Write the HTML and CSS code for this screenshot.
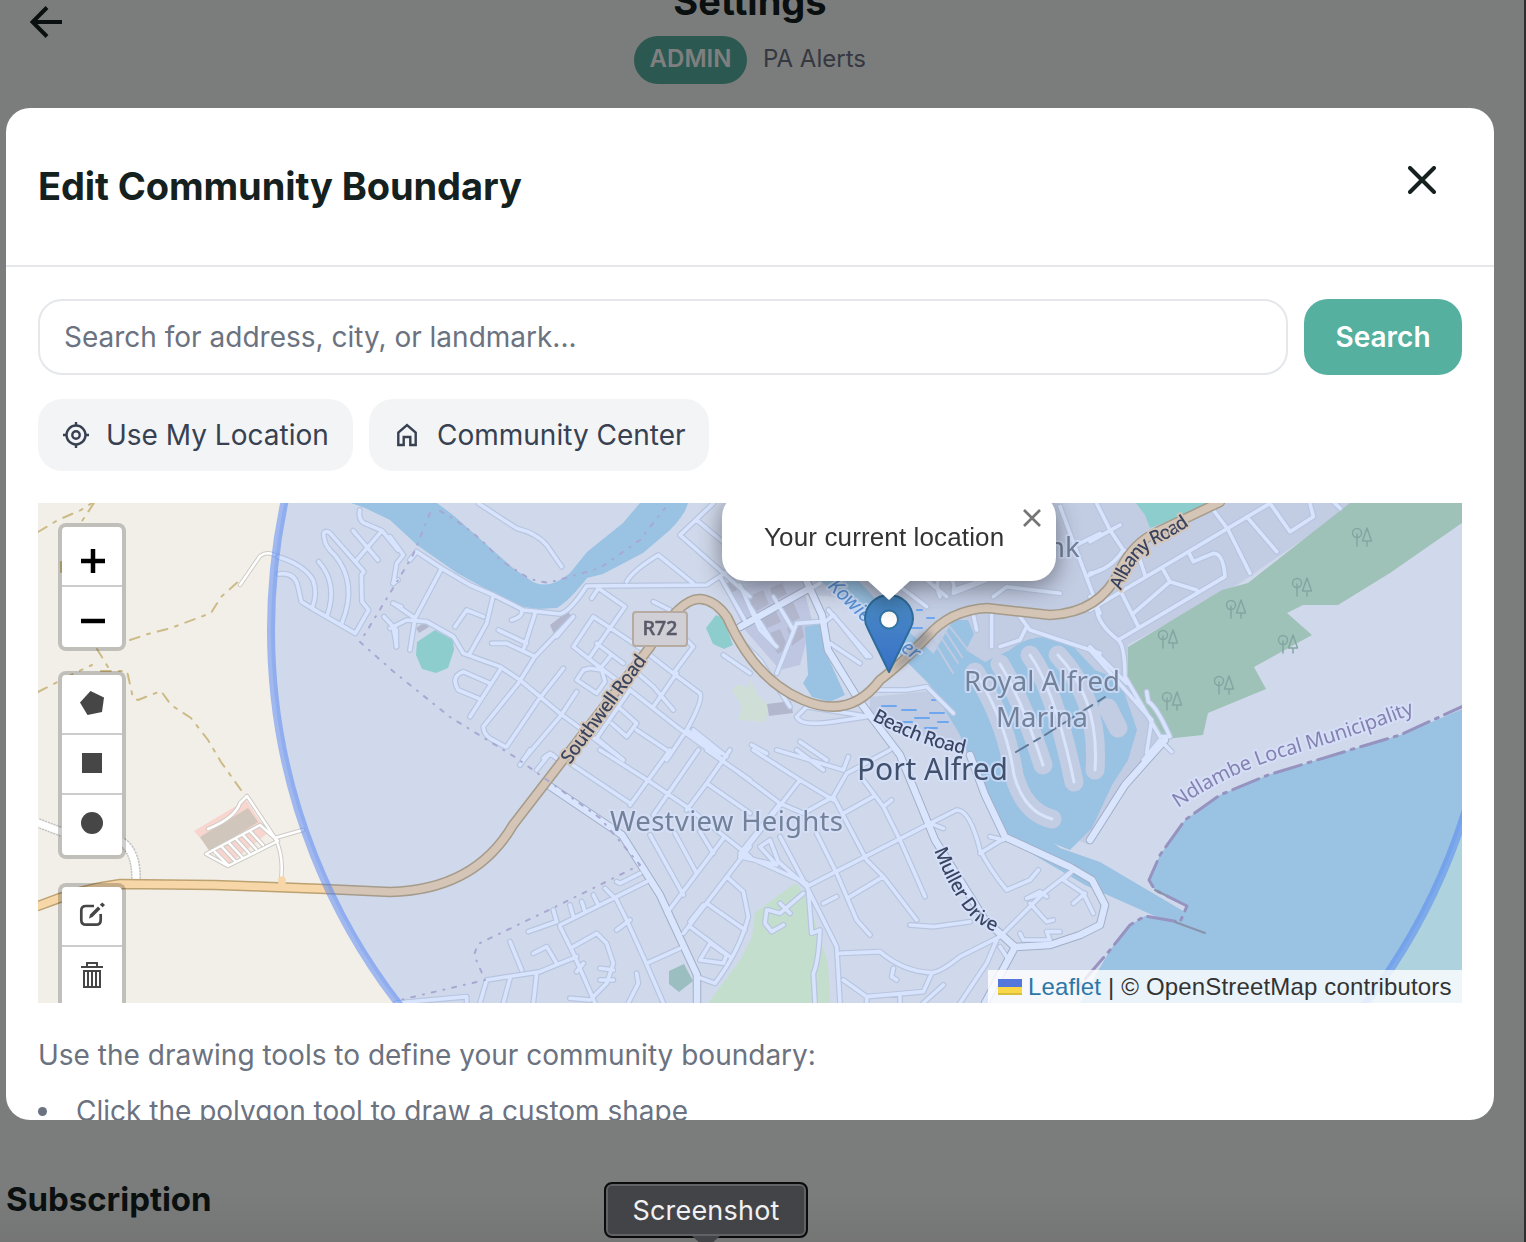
FILE: index.html
```html
<!DOCTYPE html>
<html lang="en">
<head>
<meta charset="utf-8">
<title>Edit Community Boundary</title>
<link rel="stylesheet" href="styles.css">
</head>
<body>
<div class="page">
  <header class="page-header">
    <svg class="back" viewBox="0 0 32 32"><path d="M32 16H3M17 1.500 2.500 16 17 30.500"/></svg>
    <div class="page-heading">
      <h1>Settings</h1>
      <div class="page-sub"><span class="badge">ADMIN</span><span class="org">PA Alerts</span></div>
    </div>
  </header>
  <h2 class="section-title">Subscription</h2>
</div>

<div class="overlay">
  <div class="modal">
    <div class="modal-header">
      <h2>Edit Community Boundary</h2>
      <svg class="close" viewBox="0 0 28 28"><path d="M2 2 26 26M26 2 2 26"/></svg>
    </div>
    <div class="modal-body">
      <div class="search-row">
        <div class="search-input">Search for address, city, or landmark...</div>
        <div class="search-button">Search</div>
      </div>
      <div class="chips">
        <div class="chip"><svg viewBox="0 0 28 28"><circle cx="14" cy="14" r="9.500"/><circle cx="14" cy="14" r="3.700"/><path d="M14 1v4M14 23v4M1 14h4M23 14h4"/></svg><span class="chip-a">Use My Location</span></div>
        <div class="chip"><svg viewBox="0 0 28 28"><path d="M5.300 24V11.500L14 4l8.700 7.500V24h-5.400v-8h-6.600v8z"/></svg><span class="chip-b">Community Center</span></div>
      </div>

      <div class="map">
        <svg class="tiles" viewBox="38 503 1424 500">
          <defs>
            <g id="streets">
              <g transform="translate(38 500) scale(.33333)">
                <path d="M720 170Q800 195 825 240Q840 280 822 325M722 222Q770 215 780 260L790 305 822 325 952 400 992 330 972 305 970 225 978 215 875 98Q850 85 860 120Q862 140 890 165Q960 250 912 368M842 185Q900 250 868 345M952 185 1032 92 1080 150M945 92 1020 180M965 30Q960 65 985 72L1032 92M1080 240 1065 250M1038 350 1075 390V440M1065 310 1090 320"/>
              </g>
              <g transform="translate(390 500) scale(.33333)">
                <path d="M0 110 40 165 20 190 10 250M60 180 80 155 155 205 240 255 310 285 400 330 510 342Q540 335 590 258L950 255 1080 170M155 205 75 355 60 450M10 310 75 355M0 385 50 360 110 365 190 410 220 460 330 500 390 540 510 640 700 780M310 285 290 370 240 460M195 380 230 330 280 350M365 360Q400 350 395 330M435 340 400 450M325 390 410 430M305 430 350 430 435 470M550 350 435 470 385 550 280 680Q280 700 300 715L345 740M550 350 500 410M240 650 330 510M300 550 220 515Q180 530 205 570L265 595M520 505 445 600 350 740M560 575 510 650 400 780M265 10 380 85Q440 100 470 135L515 200M605 295 625 265 705 320 600 470M610 350 550 440 640 510 720 570 860 680 1000 780M610 350 760 450 850 520 930 580Q940 600 890 690L830 780M620 430 700 490M580 510 560 540 620 580 645 545 635 510 600 505ZM660 470 635 500M720 500 790 560 850 630M860 520 790 620M720 570 620 715M710 245Q730 210 805 165L910 250M970 10 870 105 1080 290M920 60 1010 135M990 230 1070 370M790 305 840 330M850 520 910 440 890 420M665 670 710 710 740 670 690 625M740 690 830 750M910 690 1010 770M620 715 700 780M890 690 990 760M1000 465 1080 520"/>
                <path d="M10 385 20 440M460 775Q480 755 495 770"/>
              </g>
              <g transform="translate(390 750) scale(.33333)">
                <path d="M390 45 420 0M440 60 480 10 500 25M540 40 720 160M630 0 780 95 890 170 1080 320M840 0 720 165M925 0 790 195M1020 0 950 100 890 180M950 0 1080 90M950 100 1080 190M780 255 880 435M855 250 920 370M930 245 970 310M1000 265 830 490M1080 290 880 550M1010 380 1060 425 1075 500Q1050 600 975 700L920 680M950 460 1065 540M900 530 1020 620M940 465 900 515M960 580 930 630 1000 640 1010 615 960 580M750 370 690 400 680 395M770 395 510 525M415 545 500 515 490 480M550 500 540 465M585 485 575 455M625 465 610 435M680 450 645 415M510 530 550 610 615 759M550 590 620 550 650 580 670 640 650 700 600 750 540 745M680 450 710 510 760 620 820 759M680 540 720 510M870 595 770 640M500 640 470 590 430 610M395 660 360 575M560 620 450 665 290 690 270 759M360 685 340 759M440 670 430 759M20 759 230 740 230 759M740 670 745 700 715 759M630 655 670 660M630 690 670 690M560 665 580 640"/>
              </g>
              <g transform="translate(740 500) scale(.33333)">
                <path d="M0 380 240 250M30 320 100 430M100 290 160 390M0 255 60 390 110 440M240 365 170 370 110 520M0 420 60 480 150 620M170 650 200 620 390 650M170 650Q180 680 280 665L380 650M35 735 80 760M180 725 260 780M265 330 390 470M250 370 280 345 380 470M270 430 360 490M460 245 560 320M560 240 620 290M600 290Q580 240 610 230Q650 230 640 280L740 240 760 190M760 290 800 260 960 280M700 345 710 390M755 345V440M780 440 840 420 860 380M840 350 870 390 1080 460M640 270 760 230M960 20 1080 340M1000 140 1080 100M1040 230 1080 210M400 570 500 570 560 560 640 640M400 560 460 510"/>
              </g>
              <g transform="translate(740 750) scale(.33333)">
                <path d="M0 70 120 160 190 190 280 140 320 70 450 0M40 0 180 90 0 320M110 0 310 60M310 60 325 20M170 0 250 60M120 160 0 310M180 90 280 150M280 140 380 330 430 380 530 510M310 190 400 140M370 90 430 170 480 270 555 440M430 170 455 150M200 410 570 220 650 180Q690 180 720 300Q750 360 800 420L870 390 895 360M720 310 800 260M750 260 790 270M570 220 610 235M120 260 200 410M230 250 290 370 350 510 390 555M330 440 430 380M250 460 290 440M510 525 580 530 690 515M0 320 110 345 60 290 90 270 115 335 200 410 290 590 300 759M0 310 200 400M300 610 420 605Q490 665 575 668Q600 668 660 620L780 560 910 430 860 445 900 425 920 440M870 460 920 515 940 510M910 430 1000 360 970 390 1030 430 1060 490M1000 460 1035 430M310 690 380 740 550 725 575 670M380 740V759M480 740V759M550 759 610 705M460 655 455 680 470 690M770 570 740 640 660 759M780 590 800 620M840 550 850 570 930 570 920 545 960 545M85 480 120 490 190 430M80 480 75 520 95 545 130 525M120 460 150 490M205 420 215 550 240 540Q235 640 220 670L225 759"/>
              </g>
              <g transform="translate(1090 500) scale(.33333)">
                <path d="M20 10 60 90 100 150Q60 210 0 220M0 125 90 75M100 150 145 165 165 225M370 30 415 90 480 220M540 10 0 330M20 320Q20 370 85 420L405 230Q400 160 370 160L310 185 295 155M470 50 560 155M540 10 600 95 670 50 660 10M130 340 240 245 220 210M240 245 320 270M85 260 145 380M20 320 0 290M85 420Q105 440 105 530L210 710 240 710Q200 620 175 605L170 575M0 440 110 550M210 720 160 780M210 720 245 755M730 5 750 25M0 450 185 660 170 759"/>
              </g>
            </g>
            <g id="avenues">
              <path d="M548 785 622 835 660 895 697 975V1003M806 580 822 615 828 650 860 702 900 755 935 840 985 920 1015 947 1050 945 1080 935 1100 925 1105 905 1092 880 1070 867 1005 837 985 795 970 755M1015 947 985 1003M1090 840 1125 785 1165 740M740 627 810 588"/>
            </g>
            <g id="trunk">
              <path d="M38 906Q80 889 120 884L215 885 325 889 390 892Q475 890 513 825L550 777 650 647Q680 598 700 599Q715 600 727 617Q755 680 803 700Q850 720 880 680Q900 665 927 637Q950 610 987 608L1050 615Q1100 613 1120 570Q1133 543 1157 532L1220 502"/>
            </g>
            <g id="trees"><circle cx="5" cy="6" r="4.500"/><path d="M5 7v12M15 1 10.500 14h9ZM15 14v5"/></g>
            <filter id="soft"><feGaussianBlur stdDeviation="0.600"/></filter>
            <linearGradient id="pin" x1="0" y1="0" x2="0" y2="1"><stop offset="0" stop-color="#4a8bc4"/><stop offset="1" stop-color="#3871c8"/></linearGradient>
          </defs>

          <rect class="land" x="38" y="503" width="1424" height="500"/>
          <g filter="url(#soft)">
            <g class="built">
              <path d="M740 500H1360L1240 583 1128 645V678L1165 740 1125 785 1090 845 1010 815 960 730 920 660 880 600 740 590Z"/>
              <path d="M870 697 940 690 965 730 960 750 870 715Z"/>
              <path class="old-town" d="M725 590 800 575 812 620 800 665 780 670 745 630Z"/>
            </g>
            <g class="green">
              <path d="M796 883 808 900 828 963 830 1003H708L740 960 752 937 755 912Z"/>
              <path class="school" d="M732 690 738 684 748 688 750 680 758 695 768 705 766 722 738 720 742 706Z"/>
            </g>
            <path class="wood" d="M1350 503H1462V523L1390 573 1338 605H1303L1287 613 1312 635 1254 667 1266 689 1208 713 1203 735 1165 739 1128 677V647L1222 590 1248 583Z"/>
            <g class="pitch">
              <path d="M435 630 453 640 454 650 448 668 436 673 422 669 416 655 417 642Z"/>
              <path d="M716 615 723 618 733 645 724 649 713 644 706 628Z"/>
              <path d="M1136 503H1210L1190 513 1150 528 1145 515Z"/>
            </g>
            <path class="deep" d="M669 971 684 964 693 981 679 992 669 984Z"/>

            <g class="water">
              <path d="M351 503 365 508 390 520 417 545 457 573 517 606 537 609 557 608Q570 600 587 578L603 574 643 553 670 530Q685 515 688 503H640L623 523 587 552 570 573Q550 590 533 582L513 568 470 530 453 515 437 503Z"/>
              <path d="M820 580H858L890 615 925 646 950 669 980 700 1000 730 1010 775 1023 820 1060 848 1100 862 1190 915 1175 925 1085 885 1000 835 980 785 960 735 930 685 900 655Z"/>
              <path d="M805 627 820 623 827 655 845 695 830 702 812 697 803 683 808 675Z"/>
              <path d="M953 620H968L974 634 966 650 985 662 1010 650Q1025 636 1050 637L1070 643 1095 670 1120 680 1137 730 1128 760 1112 785 1092 828 1070 850 1020 830 990 790 960 730 930 660Z"/>
              <path d="M1470 706 1400 735 1350 750 1268 775 1220 795 1185 820 1160 855 1149 880 1155 890 1187 906 1180 922 1145 916 1130 925 1110 950 1080 1003H1462Z"/>
              <path class="reeds" d="M882 706h14M902 710h14M930 713h14M915 718h14M903 722h9M938 722h10M925 728h12M932 700h7M910 628h12M927 618h7M917 610h5"/>
            </g>
            <g class="fingers">
              <path d="M975 672Q1006 720 1014 775Q1024 812 1052 819M1000 664Q1022 700 1043 765M1030 655Q1055 690 1074 782M1058 655Q1100 700 1095 770M1108 708 1118 728"/>
              <path class="finger-roads" d="M975 672Q1006 720 1014 775Q1024 812 1052 819M1000 664Q1022 700 1043 765M1030 655Q1055 690 1074 782M1058 655Q1100 700 1095 770"/>
            </g>
            <path class="piers" d="M933 640 953 673M940 636 958 663M945 631 962 657M950 627 968 650"/>

            <g class="blocks">
              <path d="m748 597 15-7 6 14-14 8zM770 588l12-5 5 11-13 7zM757 618l18-9 6 13-16 7zM783 607l10-5 7 16-12 6zM765 635l15-6 8 18-10 7zM787 628l14-6 3 15-12 9zM767 704l24-3 2 12-24 3zM722 585l12-5 5 9-12 6zM416 628l9-6 4 5-10 6zM550 625l18-14 3 5-17 18z"/>
            </g>
            <path class="mall" d="M194 831 246 800 268 833 225 867Z"/>
            <path class="store" d="M200 837 248 808 258 822 210 852Z"/>
            <path class="service-case" d="M208 829Q235 818 240 803L247 796 275 838 303 830M275 838Q284 855 281 880M206 854 260 825 278 841 228 866ZM215 852 228 865M222 847 235 861M229 843 242 857M236 839 249 853M243 835 256 849M250 831 263 845M240 585 260 556Q268 550 278 557"/>
            <path class="service-fill" d="M208 829Q235 818 240 803L247 796 275 838 303 830M275 838Q284 855 281 880M206 854 260 825 278 841 228 866ZM215 852 228 865M222 847 235 861M229 843 242 857M236 839 249 853M243 835 256 849M250 831 263 845M240 585 260 556Q268 550 278 557"/>
            <path class="track-case" d="M38 823 62 832M122 842Q137 852 136 882"/>
            <path class="track" d="M38 823 62 832M122 842Q137 852 136 882"/>

            <use href="#streets" class="street-case"/>
            <use href="#avenues" class="avenue-case"/>
            <use href="#streets" class="street"/>
            <use href="#avenues" class="avenue"/>
            <use href="#trunk" class="trunk-case"/>
            <path class="trunk" d="M282 886v-6"/>
            <use href="#trunk" class="trunk"/>

            <path class="footpath" d="M38 532 58 520 81 510 95 501M94 503 78 527M61 562v10M130 640 148 634 171 628 211 613 221 597 240 580M38 692 75 673 92 665M97 649 108 667 101 671 127 671 133 698 138 700 161 691 171 705 191 718 208 740 221 762 241 790"/>
            <path class="parish" d="M430 513 413 555 395 585 360 642 394 672 450 717 515 757 600 818 640 865 555 907 478 944 474 955 485 980 400 1000M440 511Q475 530 500 560L530 579 548 583 600 568 640 540 665 508"/>
            <path class="border" d="M1470 703 1400 735 1350 750 1268 775 1220 795 1185 820 1160 855 1149 880 1155 890 1187 906 1180 922 1145 916 1130 925 1110 950 1080 985"/>
            <path class="jetty" d="M1155 890 1165 895M1175 922 1205 933"/>
            <path class="bridge" d="M1016 752 1040 738M1045 735 1105 697"/>

            <g class="trees">
              <use href="#trees" x="1352" y="527"/><use href="#trees" x="1292" y="577"/><use href="#trees" x="1226" y="599"/><use href="#trees" x="1158" y="629"/><use href="#trees" x="1278" y="634"/><use href="#trees" x="1214" y="675"/><use href="#trees" x="1162" y="691"/>
            </g>

            <g class="shield"><rect x="633" y="612" width="54" height="34" rx="3"/><text x="660" y="635" textLength="35">R72</text></g>
            <g class="labels">
              <text class="suburb" x="610" y="831" textLength="233">Westview Heights</text>
              <text class="suburb" x="964" y="691" textLength="156">Royal Alfred</text>
              <text class="suburb" x="996" y="727" textLength="92">Marina</text>
              <text class="suburb" x="1048" y="557">nk</text>
              <text class="town" x="857" y="780" textLength="151">Port Alfred</text>
              <text class="road on-trunk" transform="translate(570 765) rotate(-53.500)" textLength="130">Southwell Road</text>
              <path id="albany" fill="none" d="M1121 591Q1136 553 1158 543T1196 520"/>
              <text class="road on-trunk"><textPath href="#albany" textLength="98">Albany Road</textPath></text>
              <path id="beach" fill="none" d="M872 720Q890 730 915 740T980 757"/>
              <text class="road"><textPath href="#beach" textLength="99">Beach Road</textPath></text>
              <path id="muller" fill="none" d="M934 850Q948 885 963 907T1004 934"/>
              <text class="road"><textPath href="#muller" textLength="105">Muller Drive</textPath></text>
              <text class="river" transform="translate(827 587) rotate(44)">Kowie</text>
              <text class="river" transform="translate(900 650) rotate(36)">er</text>
              <path id="ndlambe" fill="none" d="M1178 808Q1230 772 1290 755T1418 712"/>
              <text class="district"><textPath href="#ndlambe" textLength="256">Ndlambe Local Municipality</textPath></text>
            </g>
          </g>
          <circle class="area-fill" cx="882" cy="630" r="611"/>
          <circle class="area-line" cx="882" cy="630" r="611"/>
          <g class="marker">
            <path class="marker-shadow" d="M890 672 920 635Q940 625 925 645Q915 660 890 672Z"/>
            <path class="marker-pin" d="M889 672 868 629Q865 624 865 619A24 24 0 0 1 913 619Q913 624 910 629Z"/>
            <circle class="marker-dot" cx="889" cy="619.500" r="9"/>
          </g>
        </svg>

        <div class="controls">
          <div class="bar zoom">
            <span><svg viewBox="0 0 24 24"><path d="M0 12h24M12 0v24" stroke="#000" stroke-width="4.500"/></svg></span>
            <span><svg viewBox="0 0 24 24"><path d="M0 12h24" stroke="#000" stroke-width="4.500"/></svg></span>
          </div>
          <div class="bar">
            <span><svg viewBox="0 0 24 24"><path d="M10.500 0 24 6.500 22 21 7.500 24 0 11.500Z"/></svg></span>
            <span><svg viewBox="0 0 24 24"><path d="M2 2h20v20H2z"/></svg></span>
            <span><svg viewBox="0 0 24 24"><circle cx="12" cy="12" r="11"/></svg></span>
          </div>
          <div class="bar edit">
            <span><svg viewBox="0 0 24 24"><path d="M14 3H6Q1.300 3 1.300 7.500V17Q1.300 21.700 6 21.700H16Q20.700 21.700 20.700 17V11" fill="none" stroke="#464646" stroke-width="2.700"/><path d="M9 15.500 10 11.500 18 3.500 20.500 6 12.500 14ZM19.800 1.700 22.300-.500 25 2 22.700 4.300Z"/></svg></span>
            <span><svg class="trash" viewBox="0 0 24 28"><path d="M1 6h22M7 5.500V2h10v3.500M4 10h16v16H4zM8 10v16M12 10v16M16 10v16" fill="none" stroke="#464646" stroke-width="2"/></svg></span>
          </div>
        </div>

        <div class="popup">
          <div class="popup-box">Your current location<svg class="popup-close" viewBox="0 0 18 18"><path d="M1 1 17 17M17 1 1 17"/></svg></div>
          <div class="popup-tip"></div>
        </div>

        <div class="attribution"><span class="flag"></span><span class="attribution-text"><span class="link">Leaflet</span> | © OpenStreetMap contributors</span></div>
      </div>

      <p class="help">Use the drawing tools to define your community boundary:</p>
      <ul class="help-list"><li>Click the polygon tool to draw a custom shape</li></ul>
    </div>
  </div>
</div>

<div class="tooltip">Screenshot</div>
</body>
</html>
```
FILE: styles.css
```css
* { box-sizing: border-box; }
body { margin: 0; width: 1526px; height: 1242px; overflow: hidden; position: relative; font-family: Inter, "Liberation Sans", sans-serif; background: #f7faf9; }
h1, h2, p, ul { margin: 0; padding: 0; }

.page { height: 1242px; display: flex; flex-direction: column; justify-content: space-between; padding: 0 30px 19px 6px; border-right: 2px solid #5c5c62; background: linear-gradient(#f7faf9 1190px, #e9ebea); }
.page-header { position: relative; height: 108px; display: flex; justify-content: center; }
.page-heading { display: flex; flex-direction: column; align-items: center; gap: 11px; }
h1 { font-size: 38px; line-height: 48px; margin-top: -23px; font-weight: 700; color: #14211e; letter-spacing: 0; }
.back { position: absolute; left: 24px; top: 6px; width: 32px; height: 32px; fill: none; stroke: #14211e; stroke-width: 4; }
.page-sub { display: flex; align-items: center; gap: 16px; }
.badge { width: 113px; height: 48px; border-radius: 24px; background: #56b0a0; color: #fff; font-size: 24px; font-weight: 600; line-height: 46px; text-align: center; }
.org { font-size: 24px; line-height: 46px; height: 48px; color: #6b7080; width: 103px; white-space: nowrap; }
.section-title { font-size: 33px; line-height: 48px; font-weight: 700; color: #14211e; letter-spacing: -.05px; }

.overlay { position: absolute; inset: 0; background: rgba(0, 0, 0, .5); padding: 108px 32px 122px 6px; }
.modal { height: 1012px; border-radius: 24px; background: #fff; overflow: hidden; }
.modal-header { height: 159px; border-bottom: 2px solid #e5e7eb; padding: 0 58px 0 32px; display: flex; justify-content: space-between; align-items: center; }
.modal-header h2 { font-size: 38px; font-weight: 700; color: #14211e; letter-spacing: -.1px; white-space: nowrap; margin-bottom: 2px; }
.close { width: 28px; height: 28px; margin-bottom: 13px; fill: none; stroke: #14211e; stroke-width: 4; stroke-linecap: round; }
.modal-body { padding: 32px 32px 0; font-size: 28px; }
.search-row { display: flex; gap: 16px; height: 76px; }
.search-input { flex: 1; border: 2px solid #e5e7eb; border-radius: 24px; padding-left: 24px; line-height: 72px; color: #6b7280; }
.search-button { width: 158px; border-radius: 24px; background: #56b0a0; color: #fff; font-weight: 600; line-height: 76px; text-align: center; }
.chips { display: flex; gap: 16px; margin: 24px 0 32px; }
.chip { height: 72px; border-radius: 24px; background: #f3f4f6; color: #374151; display: flex; align-items: center; gap: 16px; padding: 0 24px; white-space: nowrap; }
.chip svg { width: 28px; height: 28px; fill: none; stroke: #374151; stroke-width: 2.400; }
.chip-a { width: 223px; }
.chip-b { width: 248px; }
.help { margin-top: 32px; line-height: 40px; color: #6b7280; white-space: nowrap; }
.help-list { margin-top: 16px; color: #6b7280; line-height: 40px; list-style: none; }
.help-list li { display: flex; align-items: center; gap: 29px; }
.help-list li::before { content: ""; width: 9px; height: 9px; border-radius: 50%; background: #6b7280; }

.map { position: relative; height: 500px; overflow: hidden; font-family: "Liberation Sans", sans-serif; }
.tiles { display: block; width: 1424px; height: 500px; fill: none; stroke-linejoin: round; stroke-linecap: round; }
.land { fill: #f2efe9; }
.built { fill: #e0dfdf; }
.old-town { fill: #dcd8dc; }
.green { fill: #e1f6c3; }
.green .school { fill: #f0f5cf; }
.wood { fill: #b4d2a9; }
.pitch { fill: #9ee0c4; }
.deep { fill: #b0ceb4; }
.water { fill: #aed3df; }
.reeds { stroke: #74b1ef; stroke-width: 2; }
.fingers { stroke: #e0dfdf; stroke-width: 19; }
.finger-roads { stroke: #fdfdfd; stroke-width: 3; }
.piers { stroke: #ddd; stroke-width: 2; }
.blocks { fill: #ccc5c4; }
.mall { fill: #f8d5cf; }
.store { fill: #d0c6bc; }
.service-case { stroke: #cecbc6; stroke-width: 4.500; }
.service-fill { stroke: #fff; stroke-width: 2.500; }
.track-case { stroke: #c2c2c2; stroke-width: 10; stroke-dasharray: 2 1; stroke-linecap: butt; }
.track { stroke: #fff; stroke-width: 7; }
#streets path { vector-effect: non-scaling-stroke; }
.street-case { stroke: #d3d6d9; stroke-width: 6; }
.street { stroke: #fcfdff; stroke-width: 3.600; }
.avenue-case { stroke: #b8babc; stroke-width: 8.500; }
.avenue { stroke: #fdfdff; stroke-width: 6.500; }
.trunk-case { stroke: #bca270; stroke-width: 10.500; }
.trunk { stroke: #f7d6a8; stroke-width: 7.500; }
.footpath { stroke: #cdbb87; stroke-width: 2; stroke-dasharray: 10 8 3 8; }
.parish { stroke: #c0b2cb; stroke-width: 2; stroke-dasharray: 4 8 1 8; }
.border { stroke: #aa98b3; stroke-width: 3; stroke-dasharray: 28 7 3 7; }
.jetty { stroke: #999; stroke-width: 2; }
.bridge { stroke: #66757d; stroke-width: 2; stroke-dasharray: 14 7; }
.trees { stroke: #91b08f; stroke-width: 1.500; }
.shield rect { fill: #f0e3ce; stroke: #d3b48b; stroke-width: 2; }
.shield text { fill: #5c5146; font: 500 20px "Noto Sans", sans-serif; text-anchor: middle; stroke: #5c5146; stroke-width: .500; }
.labels { font-family: "Noto Sans", sans-serif; }
.labels text { paint-order: stroke; stroke: #fafaff; stroke-opacity: .7; stroke-width: 4; }
.suburb { font-size: 27.500px; fill: #7d8382; }
.town { font-size: 30px; fill: #404549; }
.road { font-size: 19px; font-weight: 500; fill: #35343b; }
.labels .on-trunk { stroke: #f7d6a8; stroke-opacity: 1; }
.river { font-size: 20px; font-style: italic; fill: #5a91c8; }
.district { font-size: 20px; fill: #96819f; }
.area-fill { fill: #4d81f4; fill-opacity: .2; }
.area-line { stroke: #4d81f4; stroke-opacity: .5; stroke-width: 8; }
.marker-shadow { fill: #29394b; opacity: .35; filter: blur(3px); }
.marker-pin { fill: url(#pin); stroke: #2e6c9b; stroke-width: 2; }
.marker-dot { fill: #fff; stroke: #3274a3; stroke-width: 2; }

.controls { position: absolute; left: 20px; top: 20px; display: flex; flex-direction: column; gap: 20px; }
.edit { margin-top: 4px; }
.bar { width: 68px; border: 4px solid rgba(0, 0, 0, .2); border-radius: 8px; background: #fff; background-clip: padding-box; }
.bar span { height: 60px; border-bottom: 2px solid #ccc; display: flex; align-items: center; justify-content: center; }
.bar span:last-child { border-bottom-color: transparent; }
.bar svg { width: 24px; height: 24px; margin-bottom: 2px; fill: #464646; overflow: visible; }
.zoom svg { margin: 9px 0 0 2px; }
.bar .trash { height: 28px; }

.popup { position: absolute; left: 684px; top: -10px; width: 334px; filter: drop-shadow(0 5px 12px rgba(0, 0, 0, .45)); }
.popup-box { position: relative; height: 88px; border-radius: 24px; background: #fff; color: #333; font-size: 26px; line-height: 88px; padding-left: 42px; white-space: nowrap; letter-spacing: .13px; }
.popup-close { position: absolute; right: 15px; top: 16px; width: 18px; height: 18px; stroke: #757575; stroke-width: 2.700; }
.popup-tip { width: 44px; height: 20px; margin: -1px auto 0; background: #fff; clip-path: polygon(0 0, 100% 0, 50% 100%); }
.attribution { position: absolute; right: 0; bottom: 0; height: 33px; width: 474px; padding-left: 10px; background: rgba(255, 255, 255, .8); display: flex; align-items: center; gap: 6px; font-size: 24px; color: #333; white-space: nowrap; letter-spacing: .16px; }
.link { color: #2c77a8; }
.flag { width: 24px; height: 16px; background: linear-gradient(#5477dc 50%, #f8d748 50% 88%, #d9bd3c 88%); }

.tooltip { position: absolute; left: 604px; top: 1182px; width: 204px; height: 56px; border: 2px solid #0b0b0c; border-radius: 8px; background: #434448; box-shadow: inset 0 0 0 2px #616266; color: #f1f1f1; font-size: 27px; letter-spacing: .2px; line-height: 53px; text-align: center; }
.tooltip::after { content: ""; position: absolute; left: 86px; top: 52px; width: 28px; height: 10px; background: #434448; clip-path: polygon(0 0, 100% 0, 60% 100%, 40% 100%); }
```
